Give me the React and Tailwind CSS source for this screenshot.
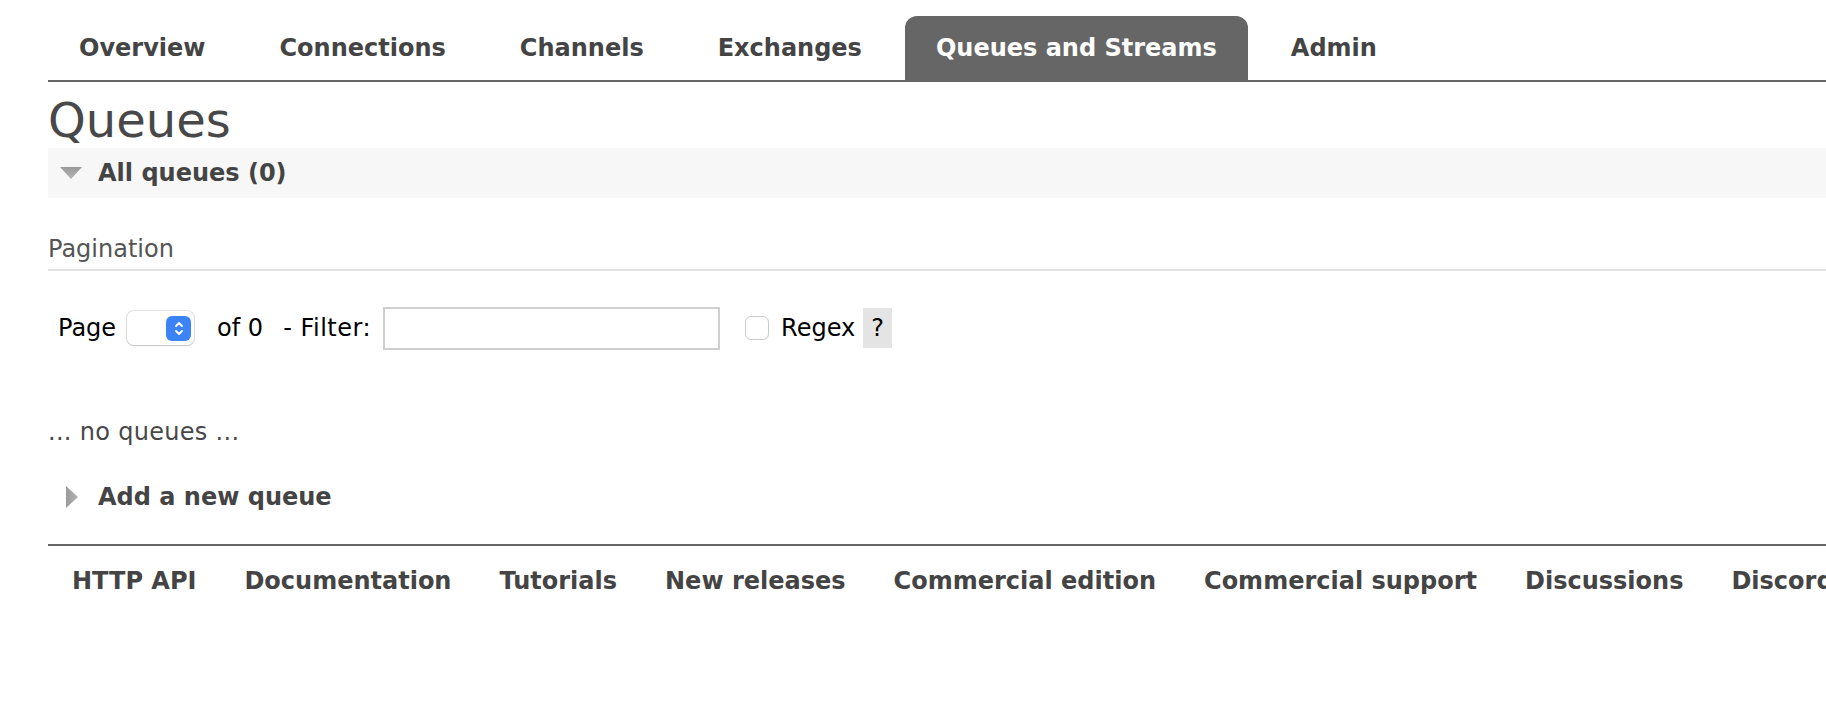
import React from "react";

const tabs = ["Overview", "Connections", "Channels", "Exchanges", "Queues and Streams", "Admin"];
const footer = [
  "HTTP API",
  "Documentation",
  "Tutorials",
  "New releases",
  "Commercial edition",
  "Commercial support",
  "Discussions",
  "Discord",
];

export default function App() {
  return (
    <div className="w-full h-[718px] overflow-hidden bg-white font-['DejaVu_Sans',sans-serif] text-[#484848]">
      <div className="pl-[48px]">
        {/* Nav tabs */}
        <div className="mt-[16px] flex items-end gap-[12px] border-b-2 border-[#666] whitespace-nowrap">
          {tabs.map((t) => (
            <div
              key={t}
              className={
                t === "Queues and Streams"
                  ? "h-[64px] px-[31px] flex items-center rounded-t-[12px] bg-[#666] text-white text-[24px] font-bold"
                  : "h-[64px] px-[31px] flex items-center text-[#444] text-[24px] font-bold"
              }
            >
              {t}
            </div>
          ))}
        </div>

        {/* Heading */}
        <h1 className="pt-[10px] leading-[56px] text-[48px] font-normal text-[#484848]">Queues</h1>

        {/* Section header */}
        <div className="h-[50px] bg-[#f7f7f7] flex items-center">
          <svg width="22" height="12" viewBox="0 0 22 12" className="ml-[12px]">
            <defs>
              <linearGradient id="gdown" x1="0" y1="0" x2="0" y2="1">
                <stop offset="0" stopColor="#9a9a9a" />
                <stop offset="1" stopColor="#b4b4b4" />
              </linearGradient>
            </defs>
            <path d="M0 0 L22 0 L11 12 Z" fill="url(#gdown)" />
          </svg>
          <span className="ml-[16px] text-[24px] font-bold text-[#444]">All queues (0)</span>
        </div>

        {/* Pagination */}
        <div className="mt-[36px] pb-[5px] border-b-2 border-[#e2e2e2] leading-[30px] text-[24px] text-[#555]">
          Pagination
        </div>

        <div className="mt-[35px] h-[44px] pl-[10px] flex items-center text-[24px] text-black whitespace-nowrap">
          <span>Page</span>
          <div className="ml-[11px] w-[67px] h-[34px] rounded-[7px] bg-white shadow-[0_0_0_1px_rgba(0,0,0,0.1),0_1px_2px_rgba(0,0,0,0.15)] flex items-center justify-end pr-[3px]">
            <div className="w-[25px] h-[25px] rounded-[6px] bg-[#3b83f6] flex items-center justify-center">
              <svg width="12" height="17" viewBox="0 0 12 17" fill="none" stroke="white" strokeWidth="1.8" strokeLinecap="round" strokeLinejoin="round">
                <path d="M3 6 L6 3 L9 6" />
                <path d="M3 11 L6 14 L9 11" />
              </svg>
            </div>
          </div>
          <span className="ml-[23px]">of 0</span>
          <span className="ml-[20px] tracking-[0.5px]">- Filter:</span>
          <div className="ml-[12px] w-[337px] h-[43px] border-2 border-[#cfcfcf] bg-white"></div>
          <div className="ml-[25px] w-[24px] h-[24px] rounded-[6px] border border-[#c9c9c9] bg-white"></div>
          <span className="ml-[12px]">Regex</span>
          <span className="ml-[8px] w-[29px] h-[40px] bg-[#e4e4e4] flex items-center justify-center">?</span>
        </div>

        <div className="mt-[67px] leading-[30px] text-[24px] tracking-[0.3px] text-[#484848]">... no queues ...</div>

        <div className="mt-[35px] h-[30px] flex items-center">
          <svg width="12" height="22" viewBox="0 0 12 22" className="ml-[18px]">
            <defs>
              <linearGradient id="gright" x1="0" y1="0" x2="1" y2="0">
                <stop offset="0" stopColor="#9a9a9a" />
                <stop offset="1" stopColor="#b4b4b4" />
              </linearGradient>
            </defs>
            <path d="M0 0 L12 11 L0 22 Z" fill="url(#gright)" />
          </svg>
          <span className="ml-[20px] text-[24px] font-bold text-[#444]">Add a new queue</span>
        </div>

        {/* Footer */}
        <div className="mt-[32px] border-t-2 border-[#666] flex whitespace-nowrap pt-[20px]">
          {footer.map((f) => (
            <span key={f} className="px-[24px] leading-[30px] text-[24px] font-bold text-[#444]">
              {f}
            </span>
          ))}
        </div>
      </div>
    </div>
  );
}
